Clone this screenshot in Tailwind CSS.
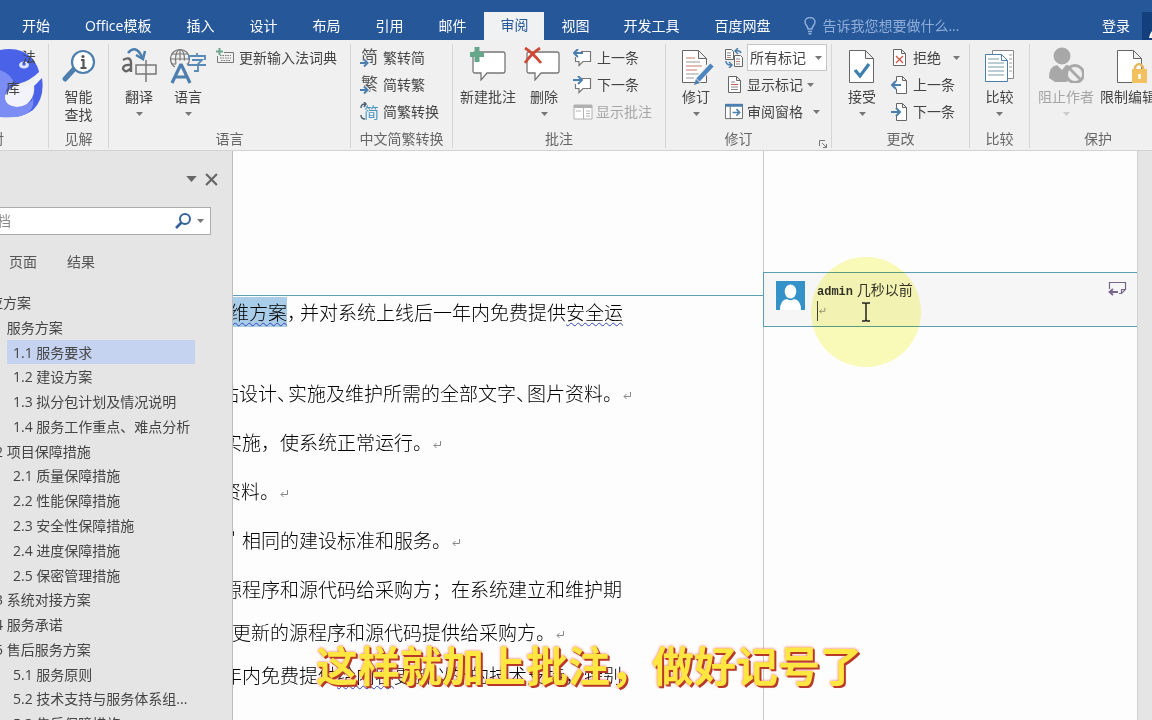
<!DOCTYPE html>
<html lang="zh-CN">
<head>
<meta charset="utf-8">
<meta name="viewport" content="width=device-width, initial-scale=1">
<title>Word 审阅</title>
<script src="https://cdn.jsdelivr.net/npm/@tailwindcss/browser@4"></script>
</head>
<body class="relative flex h-screen flex-col overflow-hidden bg-[#e5e5e5] font-['Open_Sans','Noto_Sans_CJK_SC',sans-serif] text-[14px] leading-[18px] text-[#444]">

<svg class="hidden" aria-hidden="true">
  <symbol id="down" viewBox="0 0 7 4"><path d="M0 0h7L3.500 4z" fill="currentColor"/></symbol>
  <symbol id="page" viewBox="0 0 15 17"><path d="M1.500 .5h8l4 4v12h-12zM9.500 .5v4h4" fill="#fff" stroke="#666"/></symbol>
  <symbol id="bubble" viewBox="0 0 34 30"><path d="M3 1h28q2 0 2 2v17q0 2-2 2H15l-6 7v-7H3q-2 0-2-2V3q0-2 2-2z" fill="#fff" stroke="#777" stroke-width="1.300"/></symbol>
  <symbol id="sbubble" viewBox="0 0 20 18"><path d="M8 2.500h9.500v10H10l-4 4v-4H2.500V8" fill="#fff" stroke="#777" stroke-width="1.200"/></symbol>
  <symbol id="enter" viewBox="0 0 10 8"><path d="M8.500 0v4.500H2M4.500 2L2 4.500 4.500 7" fill="none" stroke="#888"/></symbol>
</svg>

<header class="flex h-10 shrink-0 items-end bg-[#265899] text-white">
  <nav class="flex h-7 items-center gap-px pl-[5px]">
    <a href="#" class="px-[17px] py-1">开始</a>
    <a href="#" class="px-[17px] py-1">Office模板</a>
    <a href="#" class="px-[17px] py-1">插入</a>
    <a href="#" class="px-[17px] py-1">设计</a>
    <a href="#" class="px-[17px] py-1">布局</a>
    <a href="#" class="px-[17px] py-1">引用</a>
    <a href="#" class="px-[17px] py-1">邮件</a>
    <a href="#" class="h-7 bg-[#f0f1f2] px-4 py-1 text-[#265899]">审阅</a>
    <a href="#" class="px-4 py-1">视图</a>
    <a href="#" class="px-[17px] py-1">开发工具</a>
    <a href="#" class="px-[17px] py-1">百度网盘</a>
  </nav>
  <button class="ml-[17px] flex h-7 items-center gap-[6px] text-[#8fadd8]">
    <svg class="h-[18px] w-3" viewBox="0 0 12 18" fill="none" stroke="currentColor" stroke-width="1.500"><path d="M4 12c0-3-3-4-3-7a5 4.500 0 0 1 10 0c0 3-3 4-3 7zM4 14.500h4M4.500 16.800h3"/></svg>
    告诉我您想要做什么...
  </button>
  <button class="ml-auto mr-3 h-7">登录</button>
  <button aria-label="共享" class="flex h-7 w-[10px] items-end justify-end overflow-hidden bg-[#143f7d]">
    <svg class="h-3 w-[3px]" viewBox="0 0 3 12"><path d="M0 10q1-5 3-7v7z" fill="#fff"/></svg>
  </button>
</header>

<div class="flex h-[111px] shrink-0 overflow-hidden border-b border-[#d2d2d2] bg-[#f0f0f0] pt-1 pb-[2px]">
  <section class="relative flex w-[49px] shrink-0 flex-col justify-end border-r border-[#d5d5d5]">
    <svg class="absolute left-0 top-1 h-[72px] w-11" viewBox="0 0 44 72">
      <path d="M0 2q20-4 32 8 6 8 7 14-9 9-21 12-10 4-14 9L0 50z" fill="#4a62e8"/>
      <path d="M0 22q12 8 16 14Q5 44 4 50q2 10 14 8 9-1 14-8 3-6 2-12l8-8q3 20-9 32Q21 71 0 69z" fill="#4a62e8"/>
      <path d="M0 22q9 3 14 12Q3 42 5 50q3 11 16 8 12-3 12-9Q36 66 16 69H0z" fill="#7b8df4"/>
      <path d="M42 25q-6 9-15 12-12 2-20 9-4 5 1 10 9 6 19 0 7-5 5-17 8-5 10-14z" fill="#f2f3fb"/>
      <ellipse cx="24" cy="17" rx="5" ry="3.500" fill="#dfe5ff"/><circle cx="24" cy="16" r="1.800" fill="#4a62e8"/>
    </svg>
    <span class="absolute left-[22px] top-1">法</span>
    <span class="absolute left-[6px] top-[35px]">库</span>
    <h2 class="relative -ml-[10px] text-[#666]">对</h2>
  </section>

  <section class="flex w-[60px] shrink-0 flex-col items-center border-r border-[#d5d5d5]">
    <button class="flex flex-1 flex-col items-center">
      <svg class="mt-1 mb-1 h-9 w-9" viewBox="0 0 36 36"><path d="M14 20L4 31" stroke="#4d7fae" stroke-width="5" stroke-linecap="round"/><circle cx="22" cy="14" r="11" fill="#fff" stroke="#4d7fae" stroke-width="2.200"/><path d="M20 12h2.500v8M19.500 20h6" stroke="#555" stroke-width="2.200" fill="none"/><circle cx="22" cy="8.500" r="1.600" fill="#555"/></svg>
      <span class="w-7">智能查找</span>
    </button>
    <h2 class="text-[#666]">见解</h2>
  </section>

  <section class="flex w-[242px] shrink-0 flex-col items-center border-r border-[#d5d5d5]">
    <div class="flex w-full flex-1 items-start">
      <button class="flex w-[60px] flex-col items-center">
        <svg class="mt-[2px] mb-[6px] h-9 w-9" viewBox="0 0 36 36" fill="none"><path d="M7 7q8-9 14 4" stroke="#4d7fae" stroke-width="2.500"/><path d="M15 9l7 4 2-8" stroke="#4d7fae" stroke-width="2.500"/><path d="M2 14q7-4 8 2v10M10 19q-8-1-8 4 3 5 8-1" stroke="#666" stroke-width="2.400"/><path d="M15 19h20v9H15zM25 14v22" stroke="#777" stroke-width="1.500"/></svg>
        <span>翻译</span><svg class="mt-[6px] h-1 w-[7px] text-[#777]"><use href="#down"/></svg>
      </button>
      <button class="-ml-[5px] flex w-12 flex-col items-center">
        <svg class="mt-1 mb-1 h-9 w-9" viewBox="0 0 36 36" fill="none"><g stroke="#777" stroke-width="1.200"><circle cx="10" cy="11" r="9.500"/><ellipse cx="10" cy="11" rx="4.500" ry="9.500"/><path d="M0 11h20M2 6h16M2 16h16M10 1v19"/></g><path d="M2 35L10 16h3l8 19M5 29h13" stroke="#f0f0f0" stroke-width="7"/><path d="M2 35L10.500 17h1L20 35M5 29h13" stroke="#4d7fae" stroke-width="3.200"/><path d="M27 5v3M19 12V8h16v4M22 12h10l-4 4v7h-4M18 17h18" stroke="#5a8ab8" stroke-width="1.800"/></svg>
        <span>语言</span><svg class="mt-[6px] h-1 w-[7px] text-[#777]"><use href="#down"/></svg>
      </button>
      <button class="ml-1 flex h-[27px] items-center gap-[5px] whitespace-nowrap">
        <svg class="mb-1 h-[15px] w-[18px]" viewBox="0 0 18 15" fill="none"><path d="M8 4.500h9.500v10H1.500V8" stroke="#777"/><path d="M4 7.500h11M4 10h11M5 12.500h9" stroke="#777" stroke-dasharray="1.500 1"/><path d="M3.500 0v7M0 3.500h7" stroke="#6fa58f" stroke-width="2"/></svg>
        更新输入法词典
      </button>
    </div>
    <h2 class="text-[#666]">语言</h2>
  </section>

  <section class="flex w-[102px] shrink-0 flex-col items-center border-r border-[#d5d5d5]">
    <div class="flex w-full flex-1 flex-col pl-[9px]">
      <button class="flex h-[27px] items-center gap-1"><svg class="h-5 w-[19px]" viewBox="0 0 19 20" fill="none"><text x="1" y="15" font-size="17" fill="#555">简</text><path d="M0 15h7M4 11.500l3.500 3.500L4 18.500" stroke="#f0f0f0" stroke-width="4"/><path d="M0 15h7M4 11.500l3.500 3.500L4 18.500" stroke="#4d7fae" stroke-width="2"/></svg>繁转简</button>
      <button class="flex h-[27px] items-center gap-1"><svg class="h-5 w-[19px]" viewBox="0 0 19 20" fill="none"><text x="1" y="15" font-size="17" fill="#555">繁</text><path d="M0 15h7M4 11.500l3.500 3.500L4 18.500" stroke="#f0f0f0" stroke-width="4"/><path d="M0 15h7M4 11.500l3.500 3.500L4 18.500" stroke="#4d7fae" stroke-width="2"/></svg>简转繁</button>
      <button class="flex h-[27px] items-center gap-1"><svg class="h-5 w-[19px]" viewBox="0 0 19 20" fill="none"><text x="4" y="16" font-size="15" fill="#4a95c4">简</text><path d="M1 6q0-4 4-4M4 0l2 2-2 3M1 13q0 4 4 4" stroke="#4f6070" stroke-width="1.500"/></svg>简繁转换</button>
    </div>
    <h2 class="text-[#666]">中文简繁转换</h2>
  </section>

  <section class="flex w-[213px] shrink-0 flex-col items-center border-r border-[#d5d5d5]">
    <div class="flex w-full flex-1 items-start">
      <button class="ml-[7px] flex w-14 flex-col items-center">
        <svg class="mt-[3px] mb-[5px] h-9 w-9" viewBox="0 0 36 36"><use href="#bubble" x="2" y="4" width="34" height="30"/><path d="M7 0v15M0 7.500h14" stroke="#66a78b" stroke-width="5"/></svg>
        <span>新建批注</span>
      </button>
      <button class="ml-2 flex w-10 flex-col items-center">
        <svg class="mt-[3px] mb-[5px] mr-1 h-9 w-9" viewBox="0 0 36 36"><use href="#bubble" x="2" y="4" width="34" height="30"/><path d="M1 1q8 5 16 15M16 1Q7 7 1 16" stroke="#cf4a36" stroke-width="2.800" fill="none"/></svg>
        <span>删除</span><svg class="mt-[6px] h-1 w-[7px] text-[#777]"><use href="#down"/></svg>
      </button>
      <div class="ml-[9px] flex flex-col">
        <button class="flex h-[27px] items-center gap-1"><svg class="h-[18px] w-5" viewBox="0 0 20 18" fill="none"><use href="#sbubble" width="20" height="18"/><path d="M10 4H2M5 0L1 4l4 4" stroke="#4d7fae" stroke-width="2"/></svg>上一条</button>
        <button class="flex h-[27px] items-center gap-1"><svg class="h-[18px] w-5" viewBox="0 0 20 18" fill="none"><use href="#sbubble" width="20" height="18"/><path d="M0 4h8M5 0l4 4-4 4" stroke="#4d7fae" stroke-width="2"/></svg>下一条</button>
        <button disabled class="flex h-[27px] items-center gap-[3px] text-[#a6a6a6]"><svg class="h-4 w-5" viewBox="0 0 20 16" fill="none"><path d="M1 1h18v14H1z" fill="#fff" stroke="#b0b0b0"/><path d="M1 2.500h18" stroke="#b0b0b0" stroke-width="3"/><path d="M10.500 4v11M13 7h4M13 9.500h4M13 12h4M3 7h5" stroke="#b5b5b5"/></svg>显示批注</button>
      </div>
    </div>
    <h2 class="text-[#666]">批注</h2>
  </section>

  <section class="relative flex w-[166px] shrink-0 flex-col items-center border-r border-[#d5d5d5]">
    <div class="flex w-full flex-1 items-start">
      <button class="ml-2 flex w-11 flex-col items-center">
        <svg class="mt-[5px] mb-[3px] h-9 w-9" viewBox="0 0 36 36" fill="none"><path d="M4.500 1.500h16l8 8v24h-24zM20.500 1.500v8h8" fill="#fff" stroke="#666"/><path d="M8 13h14M8 25h13M8 29h8" stroke="#999" stroke-width="1.200"/><path d="M8 9h9M8 17h16M8 21h11" stroke="#cc7a68" stroke-width="1.200"/><path d="M32 17L19 32" stroke="#f0f0f0" stroke-width="7"/><path d="M34 16L20 31" stroke="#4d86bf" stroke-width="4.500"/><path d="M18 30l4 4-6 2z" fill="#4d7fae"/></svg>
        <span>修订</span><svg class="mt-[6px] h-1 w-[7px] text-[#777]"><use href="#down"/></svg>
      </button>
      <div class="ml-[7px] flex flex-col">
        <div class="relative flex h-[27px] items-center gap-1">
          <svg class="h-5 w-[18px]" viewBox="0 0 18 20" fill="none"><path d="M.5 1.500h6l2 2v8h-8zM9.500 7.500h6l2 2v9h-8z" fill="#fff" stroke="#666"/><path d="M2 5h4M2 7.500h4M11 11h4M11 16h4" stroke="#888"/><path d="M11 13.500h4M2 9.500h4" stroke="#c86"/><path d="M16 5q-1-3-5-2M13 0l-3 3 3 3M1 13q0 4 5 4M4 14l3 3-3 3" stroke="#4d7fae" stroke-width="1.500"/></svg>
          <label class="sr-only" for="markup">显示以供审阅</label>
          <select id="markup" class="h-[27px] w-20 appearance-none border border-[#c6c6c6] bg-white pl-[2px]"><option>所有标记</option></select>
          <svg class="pointer-events-none absolute right-[5px] h-1 w-[7px] text-[#777]"><use href="#down"/></svg>
        </div>
        <button class="flex h-[27px] items-center gap-1"><svg class="h-[17px] w-[18px]" viewBox="-2 0 18 17"><use href="#page" width="15" height="17"/><path d="M4 6h4M4 11h7M4 13.500h7" stroke="#888"/><path d="M4 8.500h7" stroke="#c55"/></svg>显示标记<svg class="h-1 w-[7px] text-[#777]"><use href="#down"/></svg></button>
        <button class="flex h-[27px] items-center gap-1"><svg class="h-[17px] w-[18px]" viewBox="0 0 19 17" fill="none"><path d="M.5 1h18v15H.5z" fill="#fff" stroke="#666"/><path d="M0 2h19" stroke="#4d7fae" stroke-width="3"/><path d="M5.500 3v13" stroke="#666"/><path d="M8 9.500h7M12 6l3.500 3.500L12 13" stroke="#4d7fae" stroke-width="1.700"/></svg>审阅窗格<svg class="ml-[6px] h-1 w-[7px] text-[#777]"><use href="#down"/></svg></button>
      </div>
    </div>
    <h2 class="pr-5 text-[#666]">修订</h2>
    <button aria-label="更多选项" class="absolute bottom-0 right-1"><svg class="h-2 w-2" viewBox="0 0 8 8" fill="none" stroke="#777"><path d="M.5 6V.5H6M3 3l4 4M7.500 4v3.500H4"/></svg></button>
  </section>

  <section class="flex w-[138px] shrink-0 flex-col items-center border-r border-[#d5d5d5]">
    <div class="flex w-full flex-1 items-start">
      <button class="ml-2 flex w-11 flex-col items-center">
        <svg class="mt-[5px] mb-[3px] h-9 w-9" viewBox="0 0 36 36" fill="none"><path d="M5.500 1.500h16l8 8v24h-24zM21.500 1.500v8h8" fill="#fff" stroke="#666"/><path d="M11 21l5 6 9-12" stroke="#3f7fae" stroke-width="3.200"/></svg>
        <span>接受</span><svg class="mt-[6px] h-1 w-[7px] text-[#777]"><use href="#down"/></svg>
      </button>
      <div class="ml-[7px] flex flex-col">
        <button class="flex h-[27px] items-center gap-1"><svg class="h-[17px] w-[18px]" viewBox="-1 0 18 17" fill="none"><use href="#page" width="15" height="17"/><path d="M4 7l7 7M11 7l-7 7" stroke="#cf5a46" stroke-width="1.400"/></svg>拒绝<svg class="ml-2 h-1 w-[7px] text-[#777]"><use href="#down"/></svg></button>
        <button class="flex h-[27px] items-center gap-1"><svg class="h-[18px] w-[18px]" viewBox="0 0 18 18" fill="none"><path d="M5.500 5V.5h6l4 4v13h-10V13M11.500 .5v4h4" stroke="#666" fill="#fff"/><path d="M10 9H1M5 5L1 9l4 4" stroke="#4d7fae" stroke-width="2"/></svg>上一条</button>
        <button class="flex h-[27px] items-center gap-1"><svg class="h-[18px] w-[18px]" viewBox="0 0 18 18" fill="none"><path d="M5.500 5V.5h6l4 4v13h-10V13M11.500 .5v4h4" stroke="#666" fill="#fff"/><path d="M0 9h9M5 5l4 4-4 4" stroke="#4d7fae" stroke-width="2"/></svg>下一条</button>
      </div>
    </div>
    <h2 class="text-[#666]">更改</h2>
  </section>

  <section class="flex w-[60px] shrink-0 flex-col items-center border-r border-[#d5d5d5]">
    <button class="flex flex-1 flex-col items-center">
      <svg class="mt-[5px] mb-[3px] h-9 w-9" viewBox="0 0 36 36" fill="none"><path d="M10.500 1.500h21v28h-21z" fill="#fff" stroke="#888"/><path d="M27 6h3M27 10h3M27 14h3M27 18h3M27 22h3" stroke="#999"/><path d="M3.500 5.500h16l6 6v21h-22zM19.500 5.500v6h6" fill="#fff" stroke="#4d7fae"/><path d="M6 10h11M6 14h16M6 18h16M6 22h16M6 26h16" stroke="#79a"/></svg>
      <span>比较</span><svg class="mt-[6px] h-1 w-[7px] text-[#777]"><use href="#down"/></svg>
    </button>
    <h2 class="text-[#666]">比较</h2>
  </section>

  <section class="flex min-w-[134px] flex-1 flex-col pl-2">
    <div class="flex flex-1 items-start whitespace-nowrap">
      <button disabled class="flex w-14 flex-col items-center text-[#a6a6a6]">
        <svg class="mt-[3px] mb-[5px] h-9 w-9" viewBox="0 0 36 36" fill="none"><circle cx="14" cy="9" r="8.500" fill="#a8a8a8"/><path d="M1 31q0-12 8-13l5 5 4-5q8 0 9 13l-9 4H7z" fill="#a8a8a8"/><circle cx="27" cy="27" r="8.500" fill="#eee" stroke="#a8a8a8" stroke-width="2.800"/><path d="M21 21l12 12" stroke="#a8a8a8" stroke-width="2.800"/></svg>
        <span>阻止作者</span><svg class="mt-[6px] h-1 w-[7px] text-[#ccc]"><use href="#down"/></svg>
      </button>
      <button class="ml-[6px] flex w-14 flex-col items-center">
        <svg class="mt-[5px] mb-[3px] ml-1 h-9 w-9" viewBox="0 0 36 36" fill="none"><path d="M5.500 1.500h16l8 8v24h-24zM21.500 1.500v8h8" fill="#fff" stroke="#666"/><path d="M23 22v-4q4-6 8 0v4" stroke="#e5b95e" stroke-width="2.500"/><path d="M20 20h15v14H20z" fill="#f3c060"/><path d="M27.500 25v5" stroke="#fff" stroke-width="2.500"/></svg>
        <span>限制编辑</span>
      </button>
    </div>
    <h2 class="pl-[46px] text-[#666]">保护</h2>
  </section>
</div>

<div class="flex min-h-0 flex-1">
  <aside class="flex w-[233px] shrink-0 flex-col overflow-hidden border-r border-[#bdbdbd] bg-[#e5e5e5]">
    <div class="flex h-14 shrink-0 items-center justify-end gap-2 pr-[14px] text-[#666]">
      <button aria-label="导航选项"><svg class="h-[6px] w-[11px]"><use href="#down" width="11" height="6"/></svg></button>
      <button aria-label="关闭"><svg class="h-[13px] w-[13px]" viewBox="0 0 12 12" stroke="currentColor" stroke-width="2"><path d="M1 1l10 10M11 1L1 11"/></svg></button>
    </div>
    <form class="-ml-[46px] mr-[21px] flex h-7 shrink-0 items-center border border-[#ababab] bg-white">
      <input aria-label="搜索文档" placeholder="搜索文档" class="w-0 min-w-0 flex-1 bg-transparent text-[#777] placeholder:text-[#888]">
      <button type="button" aria-label="搜索"><svg class="h-4 w-4" viewBox="0 0 16 16" fill="none" stroke="#35629b"><circle cx="10" cy="6" r="5" stroke-width="2"/><path d="M6.500 9.500L1 15" stroke-width="2.600"/></svg></button>
      <button type="button" aria-label="搜索选项" class="px-[6px] text-[#777]"><svg class="h-1 w-[7px]"><use href="#down"/></svg></button>
    </form>
    <div class="flex h-[55px] shrink-0 items-center gap-[30px] pl-[9px] pb-px text-[#555]">
      <a href="#">页面</a><a href="#">结果</a>
    </div>
    <ul class="grid h-[446px] shrink-0 auto-rows-fr whitespace-nowrap leading-[25px]">
      <li><a href="#" class="-ml-[25px]">响应方案</a></li>
      <li><a href="#" class="-ml-[5px]">1 服务方案</a></li>
      <li class="ml-[7px] mr-[37px] bg-[#c5d2f0] pl-[6px]"><a href="#">1.1 服务要求</a></li>
      <li class="pl-[13px]"><a href="#">1.2 建设方案</a></li>
      <li class="pl-[13px]"><a href="#">1.3 拟分包计划及情况说明</a></li>
      <li class="pl-[13px]"><a href="#">1.4 服务工作重点、难点分析</a></li>
      <li><a href="#" class="-ml-[5px]">2 项目保障措施</a></li>
      <li class="pl-[13px]"><a href="#">2.1 质量保障措施</a></li>
      <li class="pl-[13px]"><a href="#">2.2 性能保障措施</a></li>
      <li class="pl-[13px]"><a href="#">2.3 安全性保障措施</a></li>
      <li class="pl-[13px]"><a href="#">2.4 进度保障措施</a></li>
      <li class="pl-[13px]"><a href="#">2.5 保密管理措施</a></li>
      <li><a href="#" class="-ml-[5px]">3 系统对接方案</a></li>
      <li><a href="#" class="-ml-[5px]">4 服务承诺</a></li>
      <li><a href="#" class="-ml-[5px]">5 售后服务方案</a></li>
      <li class="pl-[13px]"><a href="#">5.1 服务原则</a></li>
      <li class="pl-[13px]"><a href="#">5.2 技术支持与服务体系组...</a></li>
      <li class="pl-[13px]"><a href="#">5.3 售后保障措施</a></li>
    </ul>
  </aside>

  <main class="mr-[14px] flex min-w-0 flex-1 overflow-hidden border-r border-[#d0d0d0] bg-[#fdfdfd]">
    <article class="flex w-[531px] shrink-0 flex-col overflow-hidden whitespace-nowrap pt-[144px] font-['Noto_Sans_CJK_SC',sans-serif] text-[19px] font-light leading-[30px] text-black">
      <p class="h-[83px] border-t border-[#5f9fb5] pt-px"><span class="-ml-[3px] inline-block h-[30px] bg-[#a9cde8] underline decoration-[#3344bb] decoration-wavy decoration-1 underline-offset-2">维方案</span><span class="inline-block w-[13px]">，</span>并对系统上线后一年内免费提供<span class="underline decoration-[#3344bb] decoration-wavy decoration-1 underline-offset-2">安全运</span></p>
      <p class="-ml-[13px] h-[49px]">站设计<span class="inline-block w-[11px]">、</span>实施及维护所需的全部文字<span class="inline-block w-[11px]">、</span>图片资料。<svg class="inline h-2 w-[10px]"><use href="#enter"/></svg></p>
      <p class="-ml-[10px] h-[49px]">实施，使系统正常运行。<svg class="inline h-2 w-[10px]"><use href="#enter"/></svg></p>
      <p class="-ml-[11px] h-[49px]">资料。<svg class="inline h-2 w-[10px]"><use href="#enter"/></svg></p>
      <p class="-ml-[2px] h-[49px]"><span class="inline-block w-[11px]">'</span>相同的建设标准和服务。<svg class="inline h-2 w-[10px]"><use href="#enter"/></svg></p>
      <p class="-ml-[10px] h-[43px]">源程序和源代码给采购方；在系统建立和维护期</p>
      <p class="-ml-px h-[43px]">更新的源程序和源代码提供给采购方。<svg class="inline h-2 w-[10px]"><use href="#enter"/></svg></p>
      <p class="-ml-[10px]">年内免费提供<span class="underline decoration-[#3344bb] decoration-wavy decoration-1 underline-offset-2">给内容</span>更新以外的技术支持，特别</p>
    </article>
    <section aria-label="批注" class="-ml-px min-w-0 flex-1 border-l border-[#c8c8c8] pt-[121px]">
      <div class="-ml-px flex h-[55px] items-start border-y border-l border-[#5a9fb0] bg-[#f6f6f6] pl-3 pt-2 pr-[10px]">
        <svg class="h-[29px] w-[29px]" viewBox="0 0 29 29"><path d="M0 0h29v29H0z" fill="#3592c8"/><ellipse cx="14.500" cy="10.500" rx="5.800" ry="7" fill="#fff"/><path d="M4 29q0-10 7-11 3.500 2.500 7 0 7 1 7 11z" fill="#fff"/></svg>
        <div class="ml-3 flex flex-1 flex-col text-[14px] leading-[18px] text-[#333]">
          <p><b class="font-['Liberation_Mono',monospace] text-[12px]">admin</b> 几秒以前</p>
          <p class="flex h-[20px] items-center border-l border-[#444]"><svg class="h-2 w-2"><use href="#enter"/></svg></p>
        </div>
        <button aria-label="答复"><svg class="h-[15px] w-[19px]" viewBox="0 0 19 15" fill="none" stroke="#77658a"><path d="M1.500 8V1.500h16v7l-4 4H11M13.500 12.500v-4h4" stroke-width="1.200"/><path d="M10 11H2M5 8l-3.500 3L5 14" stroke-width="1.800"/></svg></button>
      </div>
    </section>
  </main>
</div>

<div class="pointer-events-none absolute left-[811px] top-[257px] flex h-[110px] w-[110px] items-center justify-center rounded-full bg-[#fbfcba] mix-blend-multiply">
  <svg class="h-5 w-[10px]" viewBox="0 0 10 20" fill="none" stroke="#222" stroke-width="1.500"><path d="M1 1h3l1 1 1-1h3M5 2v16M1 19h3l1-1 1 1h3"/></svg>
</div>

<p class="pointer-events-none absolute left-[316px] top-[638px] whitespace-nowrap font-['Noto_Sans_CJK_SC',sans-serif] text-[42px] font-bold leading-[52px] text-[#ffe640] [text-shadow:2px_2px_0_#b8382a,1px_1px_0_#e0452c,0_0_3px_#f0604c]">这样就加上批注，做好记号了</p>
</body>
</html>
